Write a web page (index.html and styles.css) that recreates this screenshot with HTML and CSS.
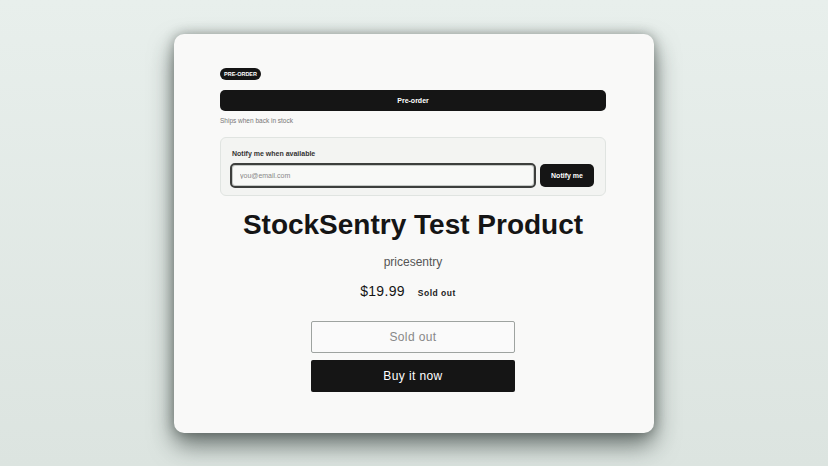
FILE: index.html
```html
<!DOCTYPE html>
<html>
<head>
    <title>StockSentry Test Product</title>
    <link rel="stylesheet" href="styles.css">
</head>
<body>

<div class="card">
    <div class="preorder">
        <span class="badge">PRE-ORDER</span>
        <button class="preorder-btn" type="button">Pre-order</button>
        <p class="ships">Ships when back in stock</p>
    </div>

    <form class="notify">
        <label for="email">Notify me when available</label>
        <div class="notify-row">
            <input id="email" type="email" placeholder="you@email.com">
            <button type="button">Notify me</button>
        </div>
    </form>

    <h1 class="title">StockSentry Test Product</h1>
    <p class="vendor">pricesentry</p>
    <div class="price-row">
        <span class="price">$19.99</span>
        <span class="status">Sold out</span>
    </div>

    <div class="actions">
        <button class="btn-outline" type="button" disabled>Sold out</button>
        <button class="btn-dark" type="button">Buy it now</button>
    </div>
</div>

</body>
</html>
```

FILE: styles.css
```css
body {
    font-family: 'Liberation Sans', Arial, sans-serif;
    background: linear-gradient(180deg, #e8efec, #dce4e0);
    margin: 0;
    min-height: 100vh;
    display: flex;
    justify-content: center;
    align-items: flex-start;
}
.card {
    background: #f9f9f8;
    width: 480px;
    height: 399px;
    box-sizing: border-box;
    margin-top: 34px;
    padding: 34px 48px 0 46px;
    border-radius: 10px;
    box-shadow: 0 12px 24px rgba(30, 40, 36, 0.6), 0 0 12px rgba(50, 60, 56, 0.4);
}
.preorder {
    display: flex;
    flex-direction: column;
    align-items: flex-start;
}
.badge {
    background: #151515;
    color: #fff;
    font-size: 5.5px;
    font-weight: bold;
    padding: 0 4px;
    height: 12px;
    line-height: 12px;
    border-radius: 7px;
}
.preorder-btn {
    width: 100%;
    height: 21px;
    margin-top: 10px;
    background: #151515;
    color: #fff;
    border: none;
    border-radius: 5px;
    font-family: inherit;
    font-size: 7px;
    font-weight: bold;
}
.ships {
    margin: 6px 0 0;
    font-size: 6.5px;
    color: #777;
}
.notify {
    margin-top: 13px;
    height: 59px;
    box-sizing: border-box;
    padding: 12px 11px 0 9px;
    background: #f3f4f2;
    border: 1px solid #e0e4e1;
    border-radius: 6px;
}
.notify label {
    display: block;
    margin-left: 2px;
    font-size: 7px;
    font-weight: bold;
    color: #333;
}
.notify-row {
    display: flex;
    gap: 4px;
    margin-top: 6px;
}
.notify input {
    flex: 1;
    height: 25px;
    box-sizing: border-box;
    padding: 0 8px;
    border: 2px solid #3d3f3d;
    box-shadow: inset 0 0 0 1px #c5c9c6;
    border-radius: 5px;
    background: #f8f9f7;
    font-family: inherit;
    font-size: 7px;
}
.notify input::placeholder {
    color: #888;
}
.notify button {
    width: 54px;
    height: 23px;
    margin-top: 1px;
    background: #151515;
    color: #fff;
    border: none;
    border-radius: 5px;
    font-family: inherit;
    font-size: 7px;
    font-weight: bold;
}
.title {
    margin: 13px 0 0;
    text-align: center;
    font-size: 28px;
    line-height: 32px;
    color: #151515;
}
.vendor {
    margin: 14px 0 0;
    text-align: center;
    font-size: 12px;
    color: #555;
}
.price-row {
    display: flex;
    justify-content: center;
    align-items: baseline;
    gap: 13px;
    margin-top: 14px;
    padding-right: 10px;
}
.price {
    font-size: 14px;
    letter-spacing: 0.3px;
    color: #151515;
}
.status {
    font-size: 8.5px;
    font-weight: bold;
    letter-spacing: 0.5px;
    color: #222;
}
.actions {
    display: flex;
    flex-direction: column;
    align-items: center;
    gap: 7px;
    margin-top: 22px;
}
.actions button {
    width: 204px;
    height: 32px;
    border-radius: 2px;
    font-family: inherit;
    font-size: 12px;
    letter-spacing: 0.4px;
}
.btn-outline {
    background: #fafafa;
    border: 1px solid #9ea3a0;
    color: #888;
}
.btn-dark {
    background: #151515;
    border: none;
    color: #fff;
}
```
